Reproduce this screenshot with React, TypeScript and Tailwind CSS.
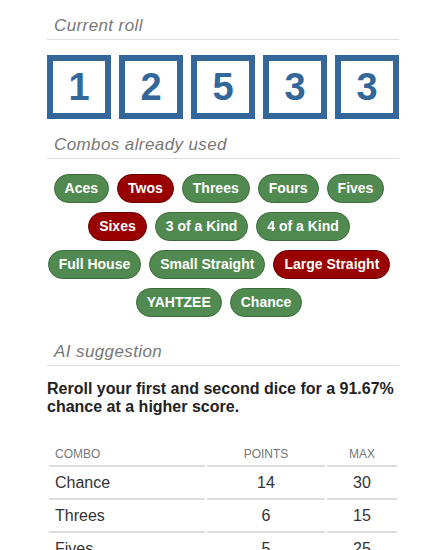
const dice = [1, 2, 5, 3, 3];

const combos = [
  { name: "Aces", used: false },
  { name: "Twos", used: true },
  { name: "Threes", used: false },
  { name: "Fours", used: false },
  { name: "Fives", used: false },
  { name: "Sixes", used: true },
  { name: "3 of a Kind", used: false },
  { name: "4 of a Kind", used: false },
  { name: "Full House", used: false },
  { name: "Small Straight", used: false },
  { name: "Large Straight", used: true },
  { name: "YAHTZEE", used: false },
  { name: "Chance", used: false },
];

const rows = [
  { combo: "Chance", points: 14, max: 30 },
  { combo: "Threes", points: 6, max: 15 },
  { combo: "Fives", points: 5, max: 25 },
];

function Heading({ children }: { children: string }) {
  return (
    <h2 className="border-b border-[#dddddd] pb-1 pl-[7px] text-[17px] leading-[19px] tracking-[0.4px] italic text-[#777777]">
      {children}
    </h2>
  );
}

export default function App() {
  return (
    <div
      className="ml-[47px] w-[352px] pt-4 text-[#333333]"
      style={{ fontFamily: '"Liberation Sans", Arial, sans-serif' }}
    >
      <Heading>Current roll</Heading>
      <div className="mt-[15px] flex gap-2">
        {dice.map((d, i) => (
          <div
            key={i}
            className="flex h-16 w-16 items-center justify-center border-[6px] border-[#336699] text-[38px] font-bold text-[#336699]"
          >
            {d}
          </div>
        ))}
      </div>

      <div className="mt-4">
        <Heading>Combos already used</Heading>
      </div>
      <div className="mt-[15px] flex flex-wrap justify-center gap-y-[9px]">
        {combos.map((c) => (
          <span
            key={c.name}
            className={
              c.used
                ? "mr-2 flex h-[29px] items-center rounded-full border border-[#660000] bg-[#990000] px-[10px] text-[14px] font-bold text-white"
                : "mr-2 flex h-[29px] items-center rounded-full border border-[#3b6b3b] bg-[#508a50] px-[10px] text-[14px] font-bold text-white"
            }
          >
            {c.name}
          </span>
        ))}
      </div>

      <div className="mt-[25px]">
        <Heading>AI suggestion</Heading>
      </div>
      <p className="mt-[14px] text-[16px] leading-[18px] font-bold text-[#222222]">
        Reroll your first and second dice for a 91.67% chance at a higher score.
      </p>

      <table className="mt-[29px] w-full border-separate border-spacing-x-[2px] border-spacing-y-0">
        <thead>
          <tr className="text-[12px] font-normal text-[#777777]">
            <th className="w-[156px] border-b-2 border-[#dddddd] px-[6px] pb-[2px] text-left font-normal">COMBO</th>
            <th className="w-[118px] border-b-2 border-[#dddddd] pb-[2px] text-center font-normal">POINTS</th>
            <th className="border-b-2 border-[#dddddd] pb-[2px] text-center font-normal">MAX</th>
          </tr>
        </thead>
        <tbody className="text-[16px]">
          {rows.map((r) => (
            <tr key={r.combo}>
              <td className="h-[33px] border-b-2 border-[#dddddd] px-[6px]">{r.combo}</td>
              <td className="h-[33px] border-b-2 border-[#dddddd] text-center">{r.points}</td>
              <td className="h-[33px] border-b-2 border-[#dddddd] text-center">{r.max}</td>
            </tr>
          ))}
        </tbody>
      </table>
    </div>
  );
}
